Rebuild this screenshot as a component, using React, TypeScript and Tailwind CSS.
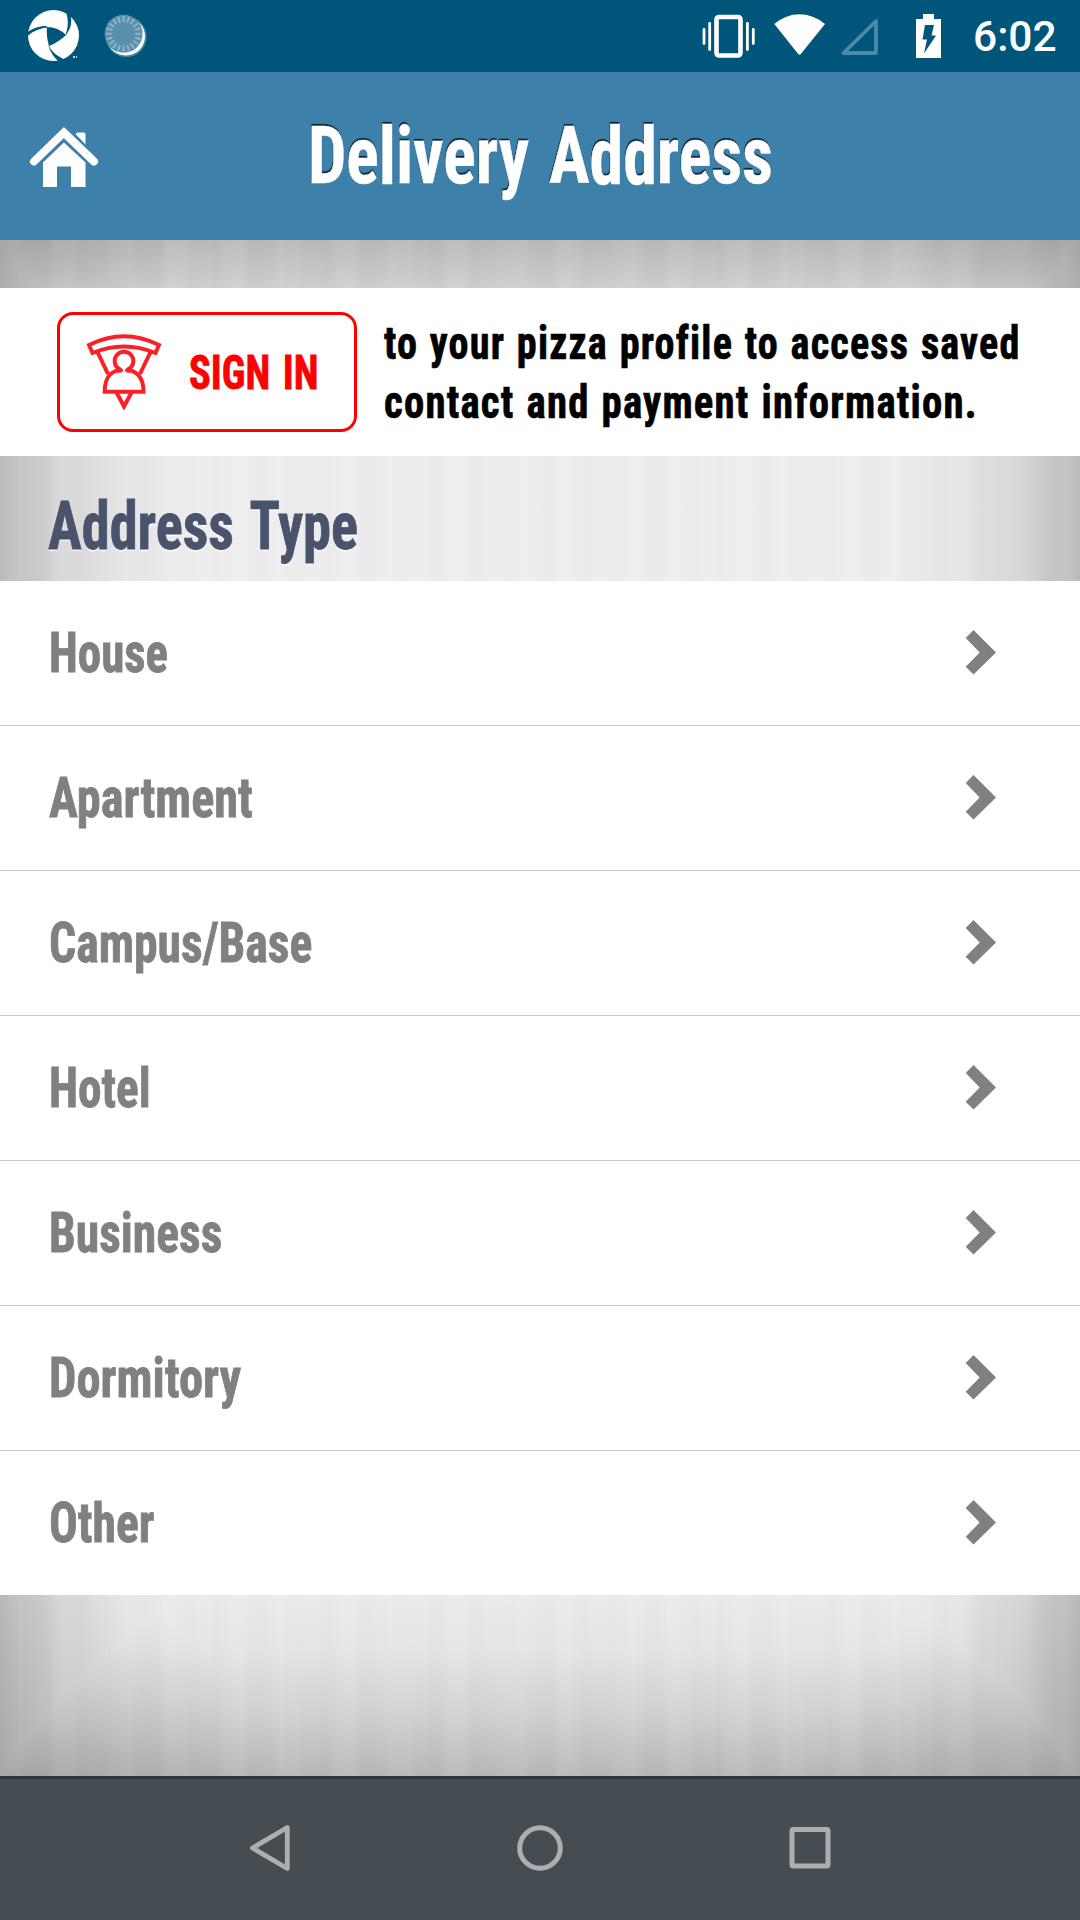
const addressTypes = [
  { label: "House", fit: "scale-x-[0.853]" },
  { label: "Apartment", fit: "scale-x-[0.878]" },
  { label: "Campus/Base", fit: "scale-x-[0.867]" },
  { label: "Hotel", fit: "scale-x-[0.86]" },
  { label: "Business", fit: "scale-x-[0.866]" },
  { label: "Dormitory", fit: "scale-x-[0.882]" },
  { label: "Other", fit: "scale-x-[0.868]" },
];

const tickAngles = Array.from({ length: 20 }, (_, i) => i * 18);

function LogoIcon() {
  return (
    <svg className="h-[52px] w-[52px]" viewBox="28 10 52 52">
      <circle cx="53.5" cy="35.5" r="25.5" fill="#fff" />
      <g fill="#00557a">
        <path d="M47 27Q58 27 66 35Q59 42 49 46Q46 36 47 27Z" />
        <path d="M67 9L71 16C72 25 70 30 65 36C68 29 69 21 66 12Z" />
        <path d="M48 44C51 51 56 56 66 60L59 62C54 57 50 52 48 44Z" />
        <path d="M27 32.5C34 27.5 40 26 46 26L48 27.5C40 28 33 31 27 36.5Z" />
      </g>
      <path d="M73 57h2M76 57h1" stroke="#fff" strokeWidth="1.5" />
    </svg>
  );
}

function SyncIcon() {
  return (
    <svg className="h-[44px] w-[44px]" viewBox="104 14 44 44">
      <circle cx="126.3" cy="36.8" r="20.3" fill="#fff" opacity="0.3" />
      <circle cx="125.8" cy="36.3" r="19.2" fill="#fff" />
      <circle cx="123.6" cy="33.8" r="19" fill="#5890aa" />
      <g stroke="#8fb4c5" strokeWidth="2">
        {tickAngles.map((a) => (
          <path key={a} d="M123.6 16v6" transform={`rotate(${a} 123.6 33.8)`} />
        ))}
      </g>
    </svg>
  );
}

function VibrateIcon() {
  return (
    <svg className="h-[44px] w-[54px]" viewBox="702 14 54 44" fill="none" stroke="#fff">
      <rect x="716.5" y="17" width="24" height="38.5" rx="2.5" strokeWidth="4.6" />
      <path d="M704 29.5v14M753.3 29.5v14M709.7 23.5v26M747.4 23.5v26" strokeWidth="2.8" strokeLinecap="round" />
    </svg>
  );
}

function WifiIcon() {
  return (
    <svg className="h-[44px] w-[52px]" viewBox="774 14 52 44">
      <path d="M774.3 24Q786 14.3 799.5 14.3T825 24L801 53.8Q799.5 55.5 798 53.8Z" fill="#fff" />
    </svg>
  );
}

function SignalIcon() {
  return (
    <svg className="h-[44px] w-[38px]" viewBox="841 14 38 44">
      <path d="M843.5 53H876V21Z" fill="none" stroke="#4b89a5" strokeWidth="3.8" strokeLinejoin="round" />
    </svg>
  );
}

function BatteryIcon() {
  return (
    <svg className="h-[44px] w-[25px]" viewBox="916 14 25 44">
      <path d="M923 14h11v5h7v39h-25V19h7Z" fill="#fff" />
      <path d="M925 25h9l-2.5 10.5h4.5L924 53.5L927 39.5h-4.5Z" fill="#00557a" />
    </svg>
  );
}

function HomeIcon() {
  return (
    <svg className="h-[62px] w-[70px]" viewBox="29 126 70 62">
      <path d="M34 161.5L63.9 132.5L94 161.5" fill="none" stroke="#fff" strokeWidth="8" strokeLinecap="round" strokeLinejoin="miter" />
      <path d="M75.5 134Q76 132.5 78 132.5H83.5Q85.5 132.5 85.5 134.5V144.5Z" fill="#fff" />
      <path d="M43 162.500L63.900 142.500L85.500 162.500V187H71V166.500H57V187H43Z" fill="#fff" />
    </svg>
  );
}

function PizzaProfileIcon() {
  return (
    <svg className="h-[76px] w-[76px]" viewBox="-1 -1 76 76" fill="none" stroke="#fb2027" strokeWidth="4">
      <path d="M2 10Q37 -7.5 72 10L68.5 18Q37 5 5.5 18Z" />
      <path d="M10.5 17L21 39M63.5 17L53 39" />
      <path d="M34.5 36.5C34.5 35 33 34.5 31.5 33.5A9.3 9.3 0 1 1 42.5 33.5C41 34.5 39.5 35 39.5 36.5" />
      <path d="M34.5 35.7H29.5C22 38.5 17.7 44 17.7 56.7H56.5C56.5 44 52 38.5 44.5 35.7H39.5" />
      <path d="M29.5 57.5L37 71.5L44.5 57.5" />
    </svg>
  );
}

function Chevron() {
  return (
    <svg className="h-[46px] w-[32px]" viewBox="965 630 32 46">
      <path d="M973.5 630L996 652.5L973.5 674.5L965.7 666.7L979.7 652.5L965.7 638Z" fill="#808080" />
    </svg>
  );
}

export default function App() {
  return (
    <div className="flex h-[1920px] w-[1080px] flex-col overflow-hidden font-['Roboto_Condensed','Roboto',sans-serif] font-bold">
      <div className="flex h-[72px] shrink-0 items-center bg-[#00557a] pl-[28px] pr-[23px]">
        <LogoIcon />
        <div className="ml-[24px]">
          <SyncIcon />
        </div>
        <div className="ml-auto flex items-center">
          <VibrateIcon />
          <div className="ml-[18px]"><WifiIcon /></div>
          <div className="ml-[15px]"><SignalIcon /></div>
          <div className="ml-[37px]"><BatteryIcon /></div>
          <span className="ml-[32px] w-[84px] whitespace-nowrap pt-[3px] font-['Roboto',sans-serif] text-[42.5px] font-medium leading-none text-white">6:02</span>
        </div>
      </div>

      <header className="grid h-[168px] shrink-0 grid-cols-[100px_1fr_100px] items-center bg-[#3d81aa]">
        <div className="pl-[29px] pt-[2px]">
          <HomeIcon />
        </div>
        <h1 className="flex justify-center whitespace-nowrap pl-[1px] text-[80.5px] leading-none text-white [-webkit-text-stroke:0.5px_#fff] [text-shadow:-0.5px_-2px_1px_rgba(0,20,35,0.85)] [word-spacing:5px]">
          <span className="inline-block scale-x-[0.844]">Delivery Address</span>
        </h1>
      </header>

      <main className="flex flex-1 flex-col bg-[radial-gradient(ellipse_180px_130px_at_0_0,rgba(90,90,90,0.22),transparent),radial-gradient(ellipse_180px_130px_at_100%_0,rgba(90,90,90,0.22),transparent),radial-gradient(ellipse_260px_200px_at_0_100%,rgba(90,90,90,0.2),transparent),radial-gradient(ellipse_260px_200px_at_100%_100%,rgba(90,90,90,0.2),transparent),repeating-linear-gradient(90deg,rgba(0,0,0,0.008)_0_12px,transparent_20px_30px,rgba(0,0,0,0.008)_36px),repeating-linear-gradient(90deg,rgba(255,255,255,0.07)_0_18px,transparent_26px_48px,rgba(255,255,255,0.07)_56px),linear-gradient(180deg,#b8b8b8_0,#cecece_48px,#e2e2e2_110px,#ededed_180px,#ededed_1345px,#e4e4e4_1410px,#d4d4d4_1465px,#c6c6c6_1500px,#b6b6b6_1536px),linear-gradient(90deg,#b6b6b6_0,#c5c5c5_22px,#d6d6d6_60px,#e4e4e4_115px,#ededed_185px,#ededed_895px,#e4e4e4_965px,#d6d6d6_1020px,#c5c5c5_1058px,#b6b6b6_1080px)] [background-blend-mode:normal,normal,normal,normal,normal,normal,darken,normal]">
        <section className="mt-[48px] flex h-[168px] shrink-0 items-center bg-white pl-[57px]">
          <button className="flex h-[120px] w-[300px] shrink-0 items-center rounded-[16px] border-[3px] border-[#ff0000] pl-[26px]">
            <PizzaProfileIcon />
            <span className="ml-[27px] inline-block origin-left scale-x-[0.825] whitespace-nowrap text-[49px] leading-none text-[#ff0000] [-webkit-text-stroke:0.8px_#ff0000] [word-spacing:4px]">SIGN IN</span>
          </button>
          <p className="ml-[27px] flex flex-col whitespace-nowrap pt-[2px] text-[46.5px] leading-[59.5px] tracking-[1.4px] text-black [-webkit-text-stroke:0.7px_#000] [word-spacing:1.5px]">
            <span className="inline-block origin-left scale-x-[0.862]">to your pizza profile to access saved</span>
            <span className="inline-block origin-left scale-x-[0.876]">contact and payment information.</span>
          </p>
        </section>

        <h2 className="flex h-[125px] shrink-0 items-center pl-[48px] pt-[15px] text-[67px] leading-none text-[#49536b] [-webkit-text-stroke:0.8px_#49536b] [text-shadow:0_2px_1px_rgba(255,255,255,0.8)] [word-spacing:5px]">
          <span className="inline-block origin-left scale-x-[0.842] whitespace-nowrap">Address Type</span>
        </h2>

        <ul className="shrink-0 bg-white">
          {addressTypes.map(({ label, fit }) => (
            <li key={label} className="box-content flex h-[144px] w-[948px] items-center justify-between border-b border-[#c8c8c8] pl-[49px] pr-[83px] last:border-b-0">
              <span className={`inline-block origin-left whitespace-nowrap text-[55px] leading-none text-[#808080] [-webkit-text-stroke:0.8px_#808080] ${fit}`}>{label}</span>
              <Chevron />
            </li>
          ))}
        </ul>
      </main>

      <nav className="h-[144px] shrink-0 border-t-[3px] border-[#2d3537] bg-[#454d52] pb-[3px]">
        <div className="grid h-full grid-cols-3 items-center justify-items-center px-[135px]">
          <svg className="h-[48px] w-[48px]" viewBox="246 1824 48 48" fill="none" stroke="#abafb1" strokeWidth="4.8" strokeLinejoin="round">
            <path d="M252.5 1848L287.3 1827.5V1868.5Z" />
          </svg>
          <svg className="h-[48px] w-[48px]" viewBox="0 0 48 48" fill="none" stroke="#abafb1" strokeWidth="5">
            <circle cx="24" cy="24" r="20.3" />
          </svg>
          <svg className="h-[48px] w-[48px]" viewBox="0 0 48 48" fill="none" stroke="#abafb1" strokeWidth="5">
            <rect x="6" y="5.5" width="36" height="36.5" rx="1.5" />
          </svg>
        </div>
      </nav>
    </div>
  );
}
